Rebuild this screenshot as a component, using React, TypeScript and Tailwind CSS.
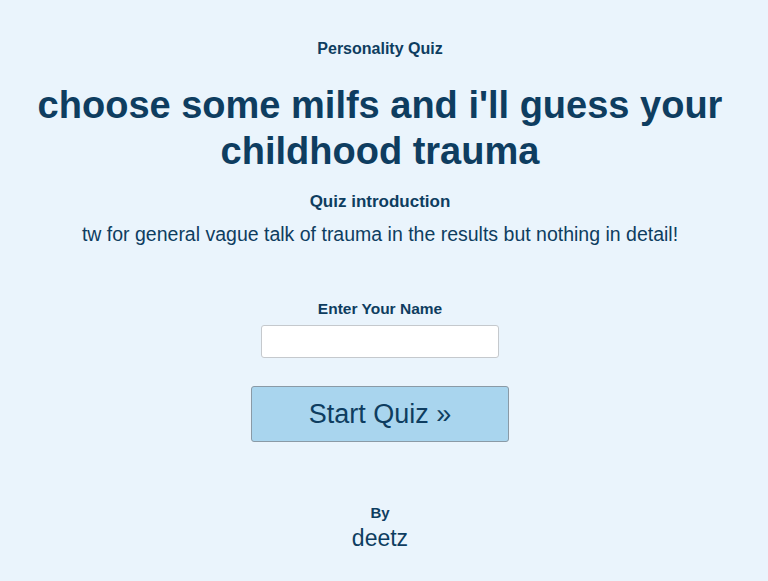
import React from "react";

export default function App() {
    return (
        <div className="min-h-[581px] w-full bg-[#eaf4fc] font-['Liberation_Sans',Arial,sans-serif] text-[#0e3d60]">
            <div className="flex flex-col items-center pl-4 pr-6 pt-[40px] text-center">
                <div className="text-[16px] font-bold leading-[18px]">Personality Quiz</div>
                <h1 className="mt-[24px] text-[38px] font-bold leading-[46px]">
                    choose some milfs and i'll guess your childhood trauma
                </h1>
                <div className="mt-[18px] text-[17px] font-bold leading-[20px]">Quiz introduction</div>
                <p className="mt-[10px] text-[19.5px] leading-[24px]">
                    tw for general vague talk of trauma in the results but nothing in detail!
                </p>

                <label className="mt-[54px] text-[15.5px] font-bold leading-[18px]">Enter Your Name</label>
                <input
                    type="text"
                    className="mt-[7px] h-[33px] w-[238px] rounded-[3px] border border-[#c5c9cd] bg-white px-2 text-[16px] outline-none"
                />
                <button className="mt-[28px] h-[56px] w-[258px] rounded-[3px] border border-[#8a9aa6] bg-[#a9d5ee] text-[27px] leading-none text-[#0e3d60]">
                    Start Quiz »
                </button>

                <div className="mt-[62px] text-[15px] font-bold leading-[18px]">By</div>
                <div className="mt-[3px] text-[23px] leading-[26px]">deetz</div>
            </div>
        </div>
    );
}
